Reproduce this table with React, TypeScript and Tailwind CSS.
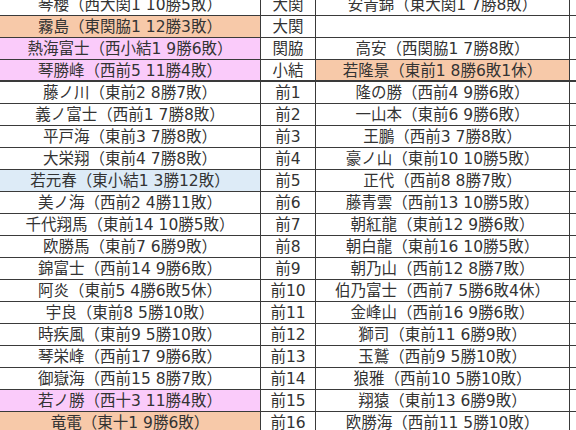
type Row = {
  left: string
  mid: string
  right: string
  leftBg?: string
  rightBg?: string
  thick?: boolean
}

const PEACH = 'bg-[#f7c9a9]'
const PINK = 'bg-[#facbfa]'
const BLUE = 'bg-[#ddebf7]'

const rows: Row[] = [
  { left: '琴櫻（西大関1 10勝5敗）', mid: '大関', right: '安青錦（東大関1 7勝8敗）' },
  { left: '霧島（東関脇1 12勝3敗）', mid: '大関', right: '', leftBg: PEACH },
  { left: '熱海富士（西小結1 9勝6敗）', mid: '関脇', right: '高安（西関脇1 7勝8敗）', leftBg: PINK },
  { left: '琴勝峰（西前5 11勝4敗）', mid: '小結', right: '若隆景（東前1 8勝6敗1休）', leftBg: PINK, rightBg: PEACH, thick: true },
  { left: '藤ノ川（東前2 8勝7敗）', mid: '前1', right: '隆の勝（西前4 9勝6敗）' },
  { left: '義ノ富士（西前1 7勝8敗）', mid: '前2', right: '一山本（東前6 9勝6敗）' },
  { left: '平戸海（東前3 7勝8敗）', mid: '前3', right: '王鵬（西前3 7勝8敗）' },
  { left: '大栄翔（東前4 7勝8敗）', mid: '前4', right: '豪ノ山（東前10 10勝5敗）' },
  { left: '若元春（東小結1 3勝12敗）', mid: '前5', right: '正代（西前8 8勝7敗）', leftBg: BLUE },
  { left: '美ノ海（西前2 4勝11敗）', mid: '前6', right: '藤青雲（西前13 10勝5敗）' },
  { left: '千代翔馬（東前14 10勝5敗）', mid: '前7', right: '朝紅龍（東前12 9勝6敗）' },
  { left: '欧勝馬（東前7 6勝9敗）', mid: '前8', right: '朝白龍（東前16 10勝5敗）' },
  { left: '錦富士（西前14 9勝6敗）', mid: '前9', right: '朝乃山（西前12 8勝7敗）' },
  { left: '阿炎（東前5 4勝6敗5休）', mid: '前10', right: '伯乃富士（西前7 5勝6敗4休）' },
  { left: '宇良（東前8 5勝10敗）', mid: '前11', right: '金峰山（西前16 9勝6敗）' },
  { left: '時疾風（東前9 5勝10敗）', mid: '前12', right: '獅司（東前11 6勝9敗）' },
  { left: '琴栄峰（西前17 9勝6敗）', mid: '前13', right: '玉鷲（西前9 5勝10敗）' },
  { left: '御嶽海（西前15 8勝7敗）', mid: '前14', right: '狼雅（西前10 5勝10敗）' },
  { left: '若ノ勝（西十3 11勝4敗）', mid: '前15', right: '翔猿（東前13 6勝9敗）', leftBg: PINK },
  { left: '竜電（東十1 9勝6敗）', mid: '前16', right: '欧勝海（西前11 5勝10敗）', leftBg: PEACH },
]

export default function App() {
  return (
    <div
      className="w-[576px] h-[430px] overflow-hidden bg-white text-[#333333] text-[15.5px]"
      style={{ fontFamily: '"DejaVu Sans", "Noto Sans CJK JP", sans-serif' }}
    >
      <div className="-mt-[6px] flex flex-col">
        {rows.map((r, i) => {
          const bb = r.thick ? 'border-b-2' : 'border-b'
          return (
            <div key={i} className="flex h-[22px] leading-[19px]">
              <div
                className={`w-[260px] shrink-0 flex items-center justify-center pt-[2px] whitespace-nowrap ${bb} border-[#3a3a3a] ${r.leftBg ?? ''}`}
              >
                {r.left}
              </div>
              <div
                className={`w-[56px] shrink-0 flex items-center justify-center pt-[2px] whitespace-nowrap border-x ${bb} border-[#3a3a3a]`}
              >
                {r.mid}
              </div>
              <div
                className={`w-[254px] shrink-0 flex items-center justify-center pt-[2px] whitespace-nowrap border-r ${bb} border-[#3a3a3a] ${r.rightBg ?? ''}`}
              >
                {r.right}
              </div>
              <div className={`flex-1 ${bb} border-[#3a3a3a]`} />
            </div>
          )
        })}
      </div>
    </div>
  )
}
